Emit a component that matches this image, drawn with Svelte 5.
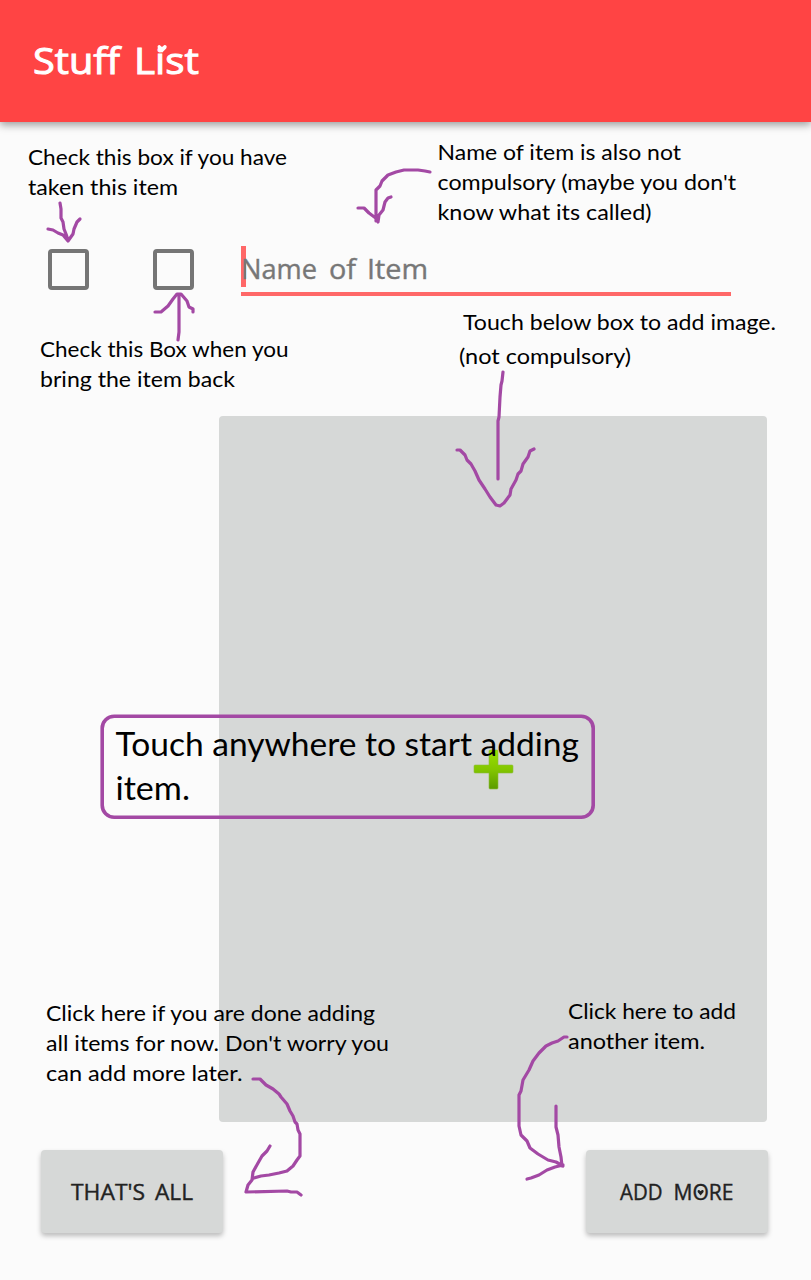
<script>
  const notes = [
    { size: 21.8, lines: [['Check this box if you have', 28, 165, 259], ['taken this item', 28, 195, 150]] },
    { size: 21.8, lines: [['Name of item is also not', 437.5, 160, 243.5], ["compulsory (maybe you don't", 437.5, 190, 298.5], ['know what its called)', 437.5, 220, 214]] },
    { size: 21.8, lines: [['Check this Box when you', 40, 357, 248.5], ['bring the item back', 40, 387, 195]] },
    { size: 21.8, lines: [['Touch below box to add image.', 463, 329.5, 313], ['(not compulsory)', 459, 364, 172]] },
    { size: 32, lines: [['Touch anywhere to start adding', 115.5, 756, 463.5], ['item.', 115.5, 800, 74.5]] },
    { size: 21.8, lines: [['Click here if you are done adding', 46, 1021, 329], ["all items for now. Don't worry you", 46, 1051, 343], ['can add more later.', 46, 1081, 196.5]] },
    { size: 21.8, lines: [['Click here to add', 568, 1019, 168], ['another item.', 568, 1049, 137]] }
  ];

  const arrows = [
    'M60 203 L61 209 L61 218 L63 222 L64 229 L66 234 L68 240 M48 229 L53 230 L58 233 L63 235 L68 241 L73 234 L74 229 L77 222 L80 219',
    'M430 172 L425 171 L418 170 L404 170 L396 172 L388 175 L382 181 L380 186 L376 190 L376 221 M358 208 L364 208 L369 213 L377 219 L378 222 L379 215 L383 210 L385 202 L388 198 L391 197',
    'M178 340 L179 332 L179 296 M155 312 L161 312 L168 306 L173 299 L177 294 L181 294 L187 301 L189 307 L193 309 L193 312',
    'M503 372 L502 381 L501 385 L500 397 L499 417 L498 421 L498 479 M457 450 L460 450 L465 455 L467 460 L471 464 L475 471 L479 480 L485 489 L490 497 L496 505 L500 506 L504 503 L510 495 L511 489 L516 480 L518 474 L521 471 L523 464 L528 457 L530 451 L534 449',
    'M253 1079 L260 1079 L266 1085 L273 1089 L279 1094 L281 1097 L287 1104 L290 1111 L293 1116 L295 1122 L297 1124 L298 1130 L300 1134 L300 1156 L297 1160 L293 1166 L287 1171 L279 1173 L269 1175 L261 1176 L254 1178 M270 1146 L267 1151 L262 1156 L258 1163 L253 1172 L252 1180 L248 1185 L246 1192 L287 1191 L291 1192 L297 1192 L301 1195',
    'M567 1037 L564 1037 L558 1041 L552 1043 L546 1046 L539 1053 L533 1061 L529 1070 L523 1080 L521 1091 L519 1095 L519 1126 L521 1135 L527 1141 L530 1148 L538 1154 L548 1160 L556 1162 L563 1166 M556 1106 L556 1127 L558 1135 L559 1147 L561 1157 L562 1166 M527 1179 L531 1178 L539 1175 L547 1170 L555 1167 L563 1165'
  ];
</script>

{#snippet lettering(words, width, height, baseline, size)}
  <svg class="lettering" {width} {height} viewBox="0 0 {width} {height}">
    <text y={baseline} font-size={size} xml:space="preserve">{#each words as [word, x, length], i}<tspan {x} textLength={length} lengthAdjust="spacingAndGlyphs">{word}</tspan>{#if i < words.length - 1}{' '}{/if}{/each}</text>
    {#if words[1][0] === 'List'}
      <path class="light" d="M129 12.8 L125 8.5 Q123.6 5 126.6 5 L129 7 L131.4 5 Q134.8 5 133.2 8.5 Z" />
    {:else if words[1][0] === 'MORE'}
      <path class="dark" d="M114.6 45.5 L111.6 42 Q111.2 39.5 113.2 40 L114.6 41.2 L116 40 Q118.2 39.5 117.6 42 Z" />
    {/if}
  </svg>
{/snippet}

<main>
  <header>
    <h1>{@render lettering([['Stuff', 0, 87], ['List', 101, 65]], 180, 50, 34, 37)}</h1>
  </header>

  <section class="item">
    <span class="box"></span>
    <span class="box"></span>
    <div class="field">
      <i class="caret"></i>
      {@render lettering([['Name', 0, 76], ['of', 88, 27], ['Item', 126, 61]], 200, 45, 32.5, 28)}
    </div>
  </section>

  <button class="picture" aria-label="Add image">
    <svg width="42" height="42" viewBox="0 0 42 42">
      <defs>
        <linearGradient id="leaf" x1="0" y1="0" x2="0" y2="1">
          <stop offset="0" stop-color="#99e000" />
          <stop offset="0.5" stop-color="#83c600" />
          <stop offset="1" stop-color="#5c9b00" />
        </linearGradient>
      </defs>
      <path d="M18 2h7q1 0 1 1v14h14q1 0 1 1v6q0 1-1 1h-14v15q0 1-1 1h-7q-1 0-1-1v-15h-14q-1 0-1-1v-6q0-1 1-1h14v-14q0-1 1-1z" fill="url(#leaf)" stroke="#8fbd3c" stroke-width=".6" />
    </svg>
  </button>

  <footer>
    <button class="action">{@render lettering([["THAT'S", 30, 74], ['ALL', 114, 38]], 182, 82, 50, 22.5)}</button>
    <button class="action">{@render lettering([['ADD', 34, 42.5], ['MORE', 87.5, 60]], 182, 82, 50, 22.5)}</button>
  </footer>

  <svg class="guide" width="811" height="1280" viewBox="0 0 811 1280">
    <rect x="102.2" y="716.2" width="491" height="101" rx="12" />
    {#each arrows as d}
      <path {d} />
    {/each}
    {#each notes as note}
      {#each note.lines as [line, x, y, length]}
        <text {x} {y} font-size={note.size} textLength={length} lengthAdjust="spacingAndGlyphs">{line}</text>
      {/each}
    {/each}
  </svg>
</main>

<style>
  :global(body) {
    background: #fbfbfb;
  }
  main {
    position: relative;
    display: flex;
    flex-direction: column;
    width: 811px;
    height: 1280px;
    overflow: hidden;
    background: #fbfbfb;
    font-family: Lato, 'Open Sans', sans-serif;
  }
  header {
    flex: none;
    height: 122px;
    padding: 40px 0 0 33px;
    box-sizing: border-box;
    background: #ff4444;
    box-shadow: 0 3px 8px rgba(0, 0, 0, 0.38);
  }
  h1 {
    margin: 0;
    color: #fff;
  }
  .lettering {
    display: block;
    overflow: visible;
    font-family: 'Open Sans', Lato, sans-serif;
    fill: currentColor;
  }
  .lettering text {
    stroke: currentColor;
    stroke-width: 0.4;
  }
  h1 .lettering text {
    font-weight: 400;
    stroke-width: 1;
  }
  .light {
    fill: #fff;
  }
  .dark {
    fill: #222;
  }
  .item {
    display: flex;
    flex: none;
    height: 50px;
    margin-top: 124px;
    padding-left: 48px;
  }
  .box {
    width: 41px;
    height: 41px;
    margin: 3px 64px 0 0;
    box-sizing: border-box;
    border: 4px solid #757575;
    border-radius: 4px;
  }
  .field {
    position: relative;
    width: 490px;
    height: 49.5px;
    margin-left: -17px;
    box-sizing: border-box;
    border-bottom: 4.5px solid #ff6868;
    color: #777;
  }
  .caret {
    position: absolute;
    left: 0;
    top: 0;
    width: 5px;
    height: 41px;
    background: #ff6868;
  }
  .field .lettering {
    position: relative;
  }
  button {
    display: flex;
    padding: 0;
    border: 0;
    border-radius: 4px;
    background: #d6d8d7;
    color: #222;
  }
  .picture {
    flex: none;
    align-items: center;
    justify-content: center;
    width: 548px;
    height: 706px;
    margin: 120px 0 0 219px;
  }
  footer {
    display: flex;
    justify-content: space-between;
    margin: 28px 43px 0 41px;
  }
  .action {
    width: 182px;
    height: 83px;
    box-shadow: 0 3px 5px rgba(0, 0, 0, 0.25);
  }
  .guide {
    position: absolute;
    inset: 0;
    pointer-events: none;
  }
  .guide rect,
  .guide path {
    fill: none;
    stroke: #a349a4;
    stroke-width: 3.2;
    stroke-linecap: round;
    stroke-linejoin: round;
  }
  .guide rect {
    stroke-width: 3.6;
  }
  .guide text {
    fill: #000;
  }
</style>
